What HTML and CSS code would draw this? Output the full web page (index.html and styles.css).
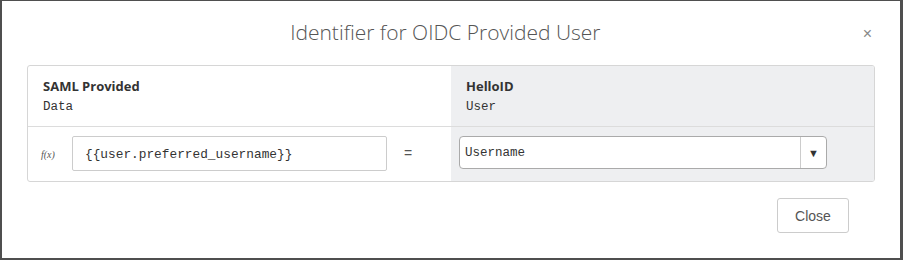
FILE: index.html
```html
<!DOCTYPE html>
<html lang="en">

<head>
    <meta charset="UTF-8">
    <meta name="viewport" content="width=device-width, initial-scale=1.0">
    <title>Identifier for OIDC Provided User</title>
    <link rel="stylesheet" href="styles.css">
</head>

<body>
    <div class="modal">
        <div class="modal-header">
            <h4 class="modal-title">Identifier for OIDC Provided User</h4>
            <button class="close" type="button">&times;</button>
        </div>
        <div class="modal-body">
            <div class="mapping">
                <div class="cell head">
                    <div class="head-title">SAML Provided</div>
                    <div class="head-sub">Data</div>
                </div>
                <div class="cell head target">
                    <div class="head-title">HelloID</div>
                    <div class="head-sub">User</div>
                </div>
                <div class="cell row source">
                    <span class="fx">f(x)</span>
                    <input class="expr" type="text" value="{{user.preferred_username}}">
                    <span class="eq">=</span>
                </div>
                <div class="cell row target">
                    <div class="select">
                        <span class="select-value">Username</span>
                        <span class="select-arrow">&#9660;</span>
                    </div>
                </div>
            </div>
        </div>
        <div class="modal-footer">
            <button class="btn" type="button">Close</button>
        </div>
    </div>
</body>

</html>
```

FILE: styles.css
```css
* {
    box-sizing: border-box;
    margin: 0;
    padding: 0;
}

body {
    background-color: #4f4f4f;
    height: 260px;
    overflow: hidden;
    font-family: "Open Sans", sans-serif;
    color: #333;
}

.modal {
    background-color: #fff;
    margin: 1px 3px 2px 2px;
    height: 257px;
}

.modal-header {
    display: flex;
    align-items: center;
    height: 64px;
    padding: 0 28px 0 26px;
}

.modal-title {
    flex: 1;
    text-align: center;
    font-family: "Open Sans", sans-serif;
    font-weight: 300;
    font-size: 21px;
    color: #555;
    padding-bottom: 3px;
}

.close {
    border: 0;
    background: none;
    font-family: "Liberation Sans", sans-serif;
    font-size: 16px;
    color: #888;
    padding-top: 2px;
}

.modal-body {
    padding: 0 25px;
}

.mapping {
    display: grid;
    grid-template-columns: 1fr 1fr;
    grid-template-rows: 61px 54px;
    border: 1px solid #d6d6d6;
    border-radius: 3px;
    overflow: hidden;
}

.cell.target {
    background-color: #eeeff1;
}

.head {
    border-bottom: 1px solid #dcdcdc;
    padding: 11px 15px 0;
}

.head-title {
    font-weight: 700;
    font-size: 13px;
    line-height: 18px;
    color: #333;
}

.head-sub {
    font-family: "Liberation Mono", monospace;
    font-size: 12.5px;
    line-height: 18px;
    margin-top: 3px;
    color: #333;
}

.row {
    display: flex;
    align-items: center;
}

.source {
    padding: 0 12px;
}

.fx {
    font-family: "Liberation Serif", serif;
    font-style: italic;
    font-size: 10px;
    color: #555;
    width: 32px;
    padding-left: 1px;
}

.expr {
    width: 315px;
    height: 35px;
    border: 1px solid #ccc;
    border-radius: 2px;
    padding: 1px 12px 0;
    font-family: "Liberation Mono", monospace;
    font-size: 12.8px;
    color: #333;
    margin-bottom: 1px;
}

.eq {
    font-family: "Liberation Sans", sans-serif;
    font-size: 14px;
    color: #555;
    margin-left: 17px;
    margin-bottom: 3px;
}

.row.target {
    padding: 0 8px;
}

.select {
    display: flex;
    width: 368px;
    height: 33px;
    background-color: #fff;
    border: 1px solid #aaa;
    border-radius: 4px;
    margin-bottom: 3px;
}

.select-value {
    flex: 1;
    display: flex;
    align-items: center;
    padding: 1px 0 0 5px;
    font-family: "Liberation Mono", monospace;
    font-size: 12.5px;
    color: #333;
}

.select-arrow {
    width: 26px;
    border-left: 1px solid #ccc;
    display: flex;
    align-items: center;
    justify-content: center;
    font-size: 11px;
    color: #333;
}

.modal-footer {
    display: flex;
    justify-content: flex-end;
    padding: 16px 51px 0 0;
}

.btn {
    width: 72px;
    height: 35px;
    background-color: #fff;
    border: 1px solid #ccc;
    border-radius: 3px;
    font-family: "Liberation Sans", sans-serif;
    font-size: 14px;
    color: #555;
}
```
